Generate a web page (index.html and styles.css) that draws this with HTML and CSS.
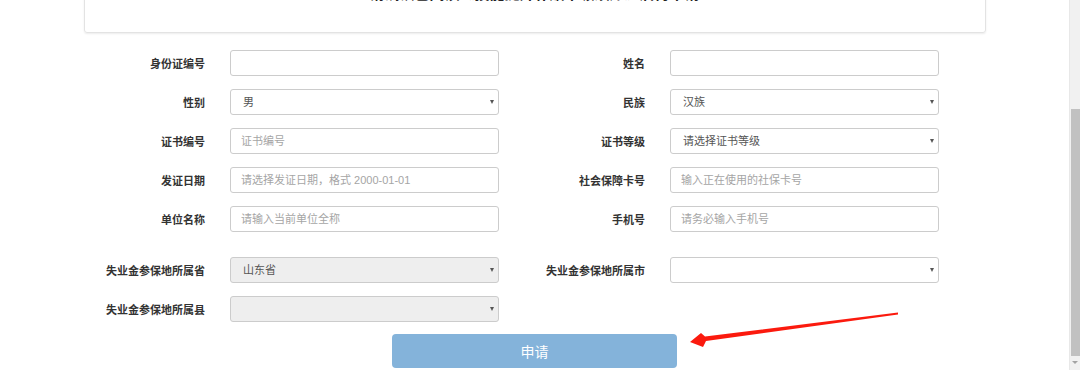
FILE: index.html
```html
<!DOCTYPE html>
<html lang="zh-CN">

<head>
  <meta charset="UTF-8" />
  <meta name="viewport" content="width=device-width, initial-scale=1.0" />
  <title>技能提升补贴申请</title>
  <link rel="stylesheet" href="styles.css">
</head>

<body>
  <div class="page">
    <!-- notice card, scrolled mostly out of view -->
    <div class="notice">
      <h2>请确认已阅读《技能提升补贴申领须知》后再申请</h2>
    </div>

    <form class="apply-form">
      <div class="form-grid">
        <div class="field">
          <label for="idcard">身份证编号</label>
          <input type="text" id="idcard">
        </div>
        <div class="field">
          <label for="name">姓名</label>
          <input type="text" id="name">
        </div>
        <div class="field">
          <label for="sex">性别</label>
          <div class="select-box">
            <select id="sex">
              <option>男</option>
              <option>女</option>
            </select>
          </div>
        </div>
        <div class="field">
          <label for="nation">民族</label>
          <div class="select-box">
            <select id="nation">
              <option>汉族</option>
            </select>
          </div>
        </div>
        <div class="field">
          <label for="certno">证书编号</label>
          <input type="text" id="certno" placeholder="证书编号">
        </div>
        <div class="field">
          <label for="certlevel">证书等级</label>
          <div class="select-box">
            <select id="certlevel">
              <option>请选择证书等级</option>
            </select>
          </div>
        </div>
        <div class="field">
          <label for="certdate">发证日期</label>
          <input type="text" id="certdate" placeholder="请选择发证日期，格式 2000-01-01">
        </div>
        <div class="field">
          <label for="sscard">社会保障卡号</label>
          <input type="text" id="sscard" placeholder="输入正在使用的社保卡号">
        </div>
        <div class="field">
          <label for="company">单位名称</label>
          <input type="text" id="company" placeholder="请输入当前单位全称">
        </div>
        <div class="field">
          <label for="phone">手机号</label>
          <input type="text" id="phone" placeholder="请务必输入手机号">
        </div>
      </div>

      <div class="form-grid area">
        <div class="field">
          <label for="province">失业金参保地所属省</label>
          <div class="select-box">
            <select id="province" disabled>
              <option>山东省</option>
            </select>
          </div>
        </div>
        <div class="field">
          <label for="city">失业金参保地所属市</label>
          <div class="select-box">
            <select id="city">
              <option></option>
            </select>
          </div>
        </div>
        <div class="field">
          <label for="county">失业金参保地所属县</label>
          <div class="select-box">
            <select id="county" disabled>
              <option></option>
            </select>
          </div>
        </div>
      </div>

      <div class="actions">
        <button type="button" class="apply-btn">申请</button>
      </div>
    </form>
  </div>

  <!-- red hint arrow drawn over the page -->
  <svg class="hint-arrow" width="214" height="40" viewBox="0 0 214 40">
    <polygon points="210,2.5 17,26.5 13,23 2,32 15,37 18,31 210,4.5" fill="#fb1a0e" />
  </svg>

  <!-- browser scrollbar -->
  <div class="scrollbar">
    <div class="scroll-thumb"></div>
    <div class="scroll-down"></div>
  </div>
</body>

</html>
```

FILE: styles.css
```css
/* Reset some default styles */
* {
    margin: 0;
    padding: 0;
    box-sizing: border-box;
}

body {
    position: relative;
    height: 370px;
    overflow: hidden;
    background-color: #fff;
    font-family: "Liberation Sans", "Noto Sans CJK SC", sans-serif;
    color: #333;
}

.page {
    width: 1069px;
}

/* Notice card at the top */
.notice {
    width: 902px;
    margin: -32px auto 0;
    padding: 15px 0 28px;
    border: 1px solid #e3e3e3;
    border-radius: 3px;
    box-shadow: 0 1px 2px rgba(0, 0, 0, 0.08);
    text-align: center;
}

.notice h2 {
    font-size: 15px;
    line-height: 20px;
    font-weight: bold;
    color: #222;
}

/* Form layout */
.apply-form {
    margin-top: 17px;
}

.form-grid {
    display: grid;
    grid-template-columns: 440px 440px;
    row-gap: 13px;
    margin-left: 59px;
}

.form-grid.area {
    margin-top: 25px;
}

.field {
    display: grid;
    grid-template-columns: 146px 269px;
    column-gap: 25px;
    align-items: center;
}

.field label {
    text-align: right;
    font-size: 11px;
    font-weight: bold;
    color: #333;
}

.field input,
.field select {
    width: 100%;
    height: 26px;
    padding: 0 10px;
    border: 1px solid #ccc;
    border-radius: 3px;
    background-color: #fff;
    font-family: inherit;
    font-size: 11px;
    color: #555;
    outline: none;
}

.field input::placeholder {
    color: #a5a5a5;
}

.field select {
    appearance: none;
    -webkit-appearance: none;
    padding-left: 12px;
}

.field select:disabled {
    background-color: #eee;
    color: #555;
    opacity: 1;
}

.select-box {
    position: relative;
}

.select-box::after {
    content: "";
    position: absolute;
    right: 5px;
    top: 11px;
    border-left: 2.5px solid transparent;
    border-right: 2.5px solid transparent;
    border-top: 4px solid #555;
}

/* Submit button */
.actions {
    margin-top: 12px;
    display: flex;
    justify-content: center;
}

.apply-btn {
    width: 285px;
    height: 34px;
    border: none;
    border-radius: 4px;
    background-color: #84b3da;
    color: #fff;
    font-family: inherit;
    font-size: 14px;
}

/* Red arrow overlay */
.hint-arrow {
    position: absolute;
    left: 688px;
    top: 310px;
}

/* Scrollbar */
.scrollbar {
    position: absolute;
    top: 0;
    right: 0;
    width: 11px;
    height: 370px;
    background-color: #f1f1f1;
    border-left: 1px solid #e8e8e8;
}

.scroll-thumb {
    position: absolute;
    top: 109px;
    left: 1px;
    width: 9px;
    height: 247px;
    background-color: #c1c1c1;
}

.scroll-down {
    position: absolute;
    top: 361px;
    left: 2px;
    border-left: 3px solid transparent;
    border-right: 3px solid transparent;
    border-top: 3px solid #a3a3a3;
}
```
